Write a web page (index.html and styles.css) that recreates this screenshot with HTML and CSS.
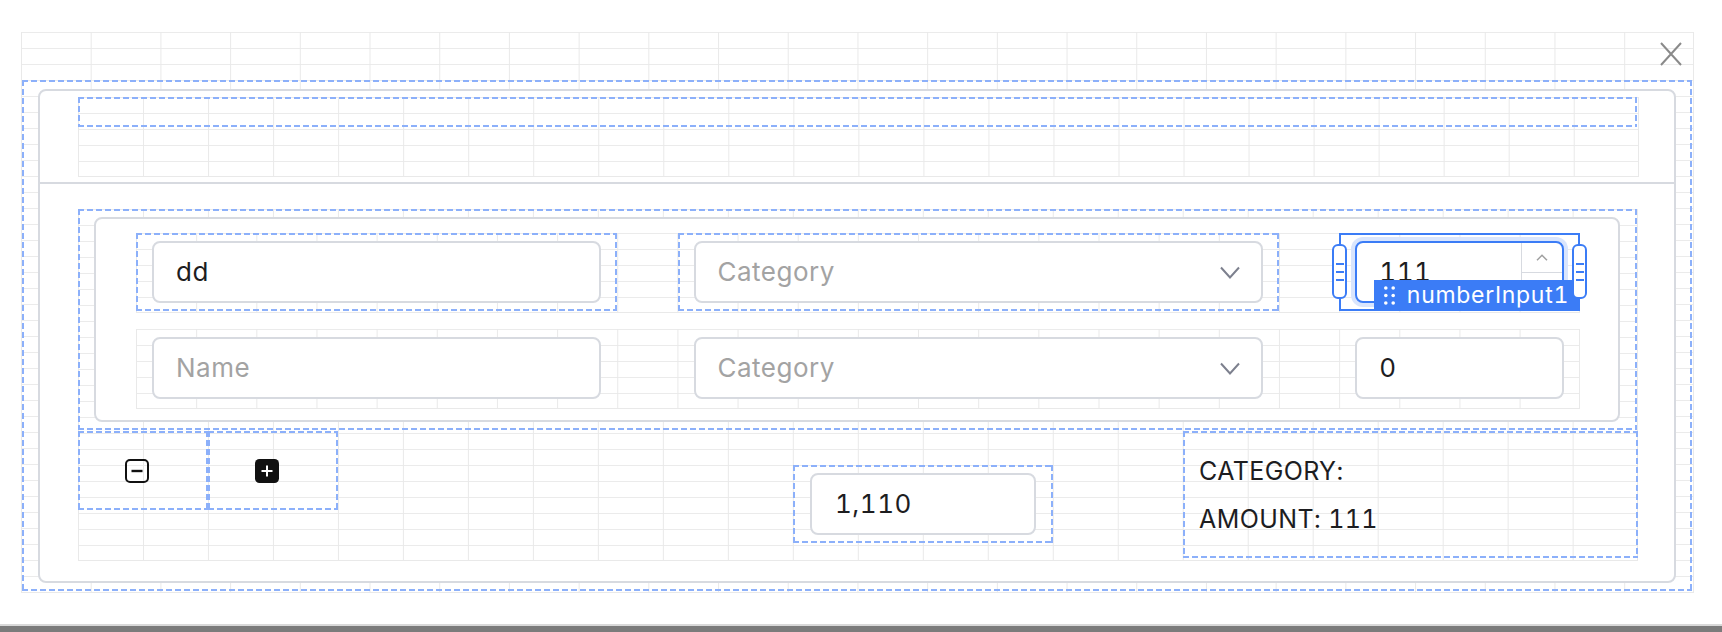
FILE: index.html
```html
<!DOCTYPE html>
<html lang="en">
<head>
<meta charset="utf-8">
<title>Modal editor</title>
<link rel="stylesheet" href="styles.css">
</head>
<body>
<div class="page">
  <div class="canvas grid">
    <button class="close" aria-label="Close">
      <svg width="22" height="24" viewBox="0 0 22 24"><path d="M1 1L21 23M21 1L1 23" fill="none" stroke="#8a8a8a" stroke-width="2"/></svg>
    </button>
    <div class="frame dashed">
      <div class="card">
        <div class="card-header">
          <div class="hdr-grid grid">
            <div class="hdr-slot dashed"></div>
          </div>
        </div>
        <div class="card-body">
          <div class="body-grid grid">
            <div class="form dashed">
              <div class="form-card">
                <div class="row grid">
                  <div class="cell c-text dashed">
                    <div class="input"><span class="val">dd</span></div>
                  </div>
                  <div class="cell c-select dashed">
                    <div class="input select"><span class="ph">Category</span>
                      <svg width="20" height="13" viewBox="0 0 20 13"><path d="M1 1.5l9 10 9-10" fill="none" stroke="#7d808e" stroke-width="2"/></svg>
                    </div>
                  </div>
                  <div class="cell c-num selected">
                    <div class="input num focused">
                      <span class="val">111</span>
                      <div class="stepper">
                        <span class="step up"><svg width="12" height="7" viewBox="0 0 12 7"><path d="M1 6.2L6 1.2l5 5" fill="none" stroke="#a0a0a0" stroke-width="1.5"/></svg></span>
                        <span class="step down"></span>
                      </div>
                    </div>
                    <div class="tag">
                      <svg width="11" height="19" viewBox="0 0 11 19"><g fill="#fff"><circle cx="1.8" cy="2" r="1.8"/><circle cx="9.2" cy="2" r="1.8"/><circle cx="1.8" cy="9.5" r="1.8"/><circle cx="9.2" cy="9.5" r="1.8"/><circle cx="1.8" cy="17" r="1.8"/><circle cx="9.2" cy="17" r="1.8"/></g></svg>
                      <span>numberInput1</span>
                    </div>
                    <span class="handle h-left"><i></i><i></i><i></i></span>
                    <span class="handle h-right"><i></i><i></i><i></i></span>
                  </div>
                </div>
                <div class="row grid">
                  <div class="cell c-text">
                    <div class="input"><span class="ph">Name</span></div>
                  </div>
                  <div class="cell c-select">
                    <div class="input select"><span class="ph">Category</span>
                      <svg width="20" height="13" viewBox="0 0 20 13"><path d="M1 1.5l9 10 9-10" fill="none" stroke="#7d808e" stroke-width="2"/></svg>
                    </div>
                  </div>
                  <div class="cell c-num">
                    <div class="input"><span class="val">0</span></div>
                  </div>
                </div>
              </div>
            </div>
            <div class="bottom">
              <div class="btn-cell c-minus dashed">
                <button class="icon-btn" aria-label="Remove row">
                  <svg width="24" height="24" viewBox="0 0 24 24"><rect x="1" y="1" width="22" height="22" rx="4" fill="none" stroke="#111" stroke-width="2"/><path d="M6.5 12h11" stroke="#111" stroke-width="2.4"/></svg>
                </button>
              </div>
              <div class="btn-cell c-plus dashed">
                <button class="icon-btn" aria-label="Add row">
                  <svg width="24" height="24" viewBox="0 0 24 24"><rect x="0" y="0" width="24" height="24" rx="4.5" fill="#111"/><path d="M12 6.5v11M6.5 12h11" stroke="#fff" stroke-width="2"/></svg>
                </button>
              </div>
              <div class="total dashed">
                <div class="input"><span class="val">1,110</span></div>
              </div>
              <div class="summary dashed">
                <p>CATEGORY:</p>
                <p>AMOUNT: 111</p>
              </div>
            </div>
          </div>
        </div>
      </div>
    </div>
  </div>
  <div class="bar"></div>
</div>
</body>
</html>
```

FILE: styles.css
```css
* { box-sizing: border-box; }
html, body { margin: 0; padding: 0; background: #fff; }
body {
  font-family: Inter, "Noto Sans", sans-serif;
  font-variant-numeric: tabular-nums;
  color: #1d1d1f;
  width: 1722px;
  height: 632px;
  overflow: hidden;
}
.page {
  display: flex;
  flex-direction: column;
  height: 632px;
  padding-top: 32px;
}
.grid {
  background-image:
    linear-gradient(to right, #e9e9e9 1px, transparent 1px),
    linear-gradient(to bottom, #ebebeb 1px, transparent 1px);
  background-size: calc(100% / 24) 16px;
  box-shadow: inset -1px -1px 0 #e9e9e9;
}
.dashed {
  border: 2px solid transparent;
  background:
    repeating-linear-gradient(90deg, #8cb0fa 0 6px, transparent 6px 9px) left top / 100% 2px no-repeat border-box,
    repeating-linear-gradient(90deg, #8cb0fa 0 6px, transparent 6px 9px) left bottom / 100% 2px no-repeat border-box,
    repeating-linear-gradient(180deg, #8cb0fa 0 6px, transparent 6px 9px) left top / 2px 100% no-repeat border-box,
    repeating-linear-gradient(180deg, #8cb0fa 0 6px, transparent 6px 9px) right top / 2px 100% no-repeat border-box;
}

.canvas {
  position: relative;
  margin-left: 21px;
  width: 1673px;
  height: 561px;
  padding: 48px 2px 0 1px;
  flex: none;
}
.close {
  position: absolute;
  left: 1639px;
  top: 10px;
  width: 22px;
  height: 24px;
  padding: 0;
  border: 0;
  background: transparent;
  display: flex;
}
.frame {
  height: 511px;
  padding: 7px 14px 6px 14px;
}
.card {
  height: 494px;
  border: 2px solid #d7dae0;
  border-radius: 8px;
  background: #fff;
  display: flex;
  flex-direction: column;
}
.card-header {
  padding: 6px 35px 5px 38px;
  border-bottom: 2px solid #d7dae0;
}
.hdr-grid { height: 80px; }
.hdr-slot { height: 30px; width: 1559px; }

.card-body { padding: 25px 36px 20px 38px; }
.body-grid {
  height: 352px;
  display: flex;
  flex-direction: column;
}
.form {
  height: 221px;
  width: 1559px;
  padding: 6px 15px 6px 14px;
  flex: none;
}
.form-card {
  height: 205px;
  border: 2px solid #d7dae0;
  border-radius: 8px;
  background: #fff;
  padding: 14px 38px 11px 40px;
  display: flex;
  flex-direction: column;
  gap: 16px;
}
.row {
  height: 80px;
  display: grid;
  grid-template-columns: repeat(24, 1fr);
  align-items: start;
}
.cell {
  height: 78px;
  padding: 6px 14px;
  border: 2px solid transparent;
}
.c-text { grid-column: 1 / 9; }
.c-select { grid-column: 10 / 20; }
.c-num { grid-column: 21 / 25; }

.input {
  height: 62px;
  border: 2px solid #d7dae0;
  border-radius: 8px;
  background: #fff;
  display: flex;
  align-items: center;
  padding: 0 22px;
  font-size: 26px;
  letter-spacing: 0.5px;
  line-height: 1;
  color: #1d1d1f;
}
.ph { color: #a3a3a3; }
.select { justify-content: space-between; padding-right: 21px; }

.num { padding-right: 0; overflow: hidden; }
.num .val { flex: 1; }
.focused {
  border-color: #3b7cf6;
  box-shadow: 0 0 0 4px #d9e5fd;
}
.stepper {
  align-self: stretch;
  width: 41px;
  border-left: 1px solid #d7dae0;
  display: flex;
  flex-direction: column;
}
.step {
  flex: 1;
  display: flex;
  align-items: center;
  justify-content: center;
}
.step.up { border-bottom: 1px solid #d7dae0; }

.selected {
  position: relative;
  border: 2px solid #3b7cf6;
}
.tag {
  position: absolute;
  right: -2px;
  bottom: -2px;
  height: 31px;
  padding: 0 11px 0 10px;
  background: #3b7cf6;
  color: #fff;
  font-size: 23px;
  letter-spacing: 0.7px;
  line-height: 1;
  display: flex;
  align-items: center;
  gap: 12px;
  white-space: nowrap;
}
.handle {
  position: absolute;
  top: 9px;
  width: 15px;
  height: 55px;
  border: 2px solid #3b7cf6;
  border-radius: 6px;
  background: #fff;
  display: flex;
  flex-direction: column;
  justify-content: center;
  align-items: center;
  gap: 6px;
  z-index: 2;
}
.handle i { display: block; width: 8px; height: 2px; background: #3b7cf6; }
.h-left { left: -9px; }
.h-right { right: -9px; }

.bottom {
  flex: 1;
  display: grid;
  grid-template-columns: repeat(24, 1fr);
  align-items: start;
  padding-top: 1px;
}
.btn-cell {
  height: 79px;
  display: flex;
  align-items: center;
  justify-content: center;
}
.c-minus { grid-column: 1 / 3; }
.c-plus { grid-column: 3 / 5; }
.icon-btn {
  width: 24px;
  height: 24px;
  padding: 0;
  border: 0;
  background: transparent;
  display: flex;
  margin-right: 12px;
}
.total {
  grid-column: 12 / 16;
  margin-top: 34px;
  height: 78px;
  padding: 6px 15px;
}
.total .input { padding-left: 23px; }
.summary {
  grid-column: 18 / 25;
  height: 127px;
  padding: 14px 14px;
}
.summary p {
  margin: 0;
  font-size: 25px;
  letter-spacing: 0.4px;
  line-height: 48px;
  color: #1d1d1f;
}

.bar {
  margin-top: auto;
  height: 8px;
  border-top: 2px solid #d9d9d9;
  background: #7b7b7b;
}
```
